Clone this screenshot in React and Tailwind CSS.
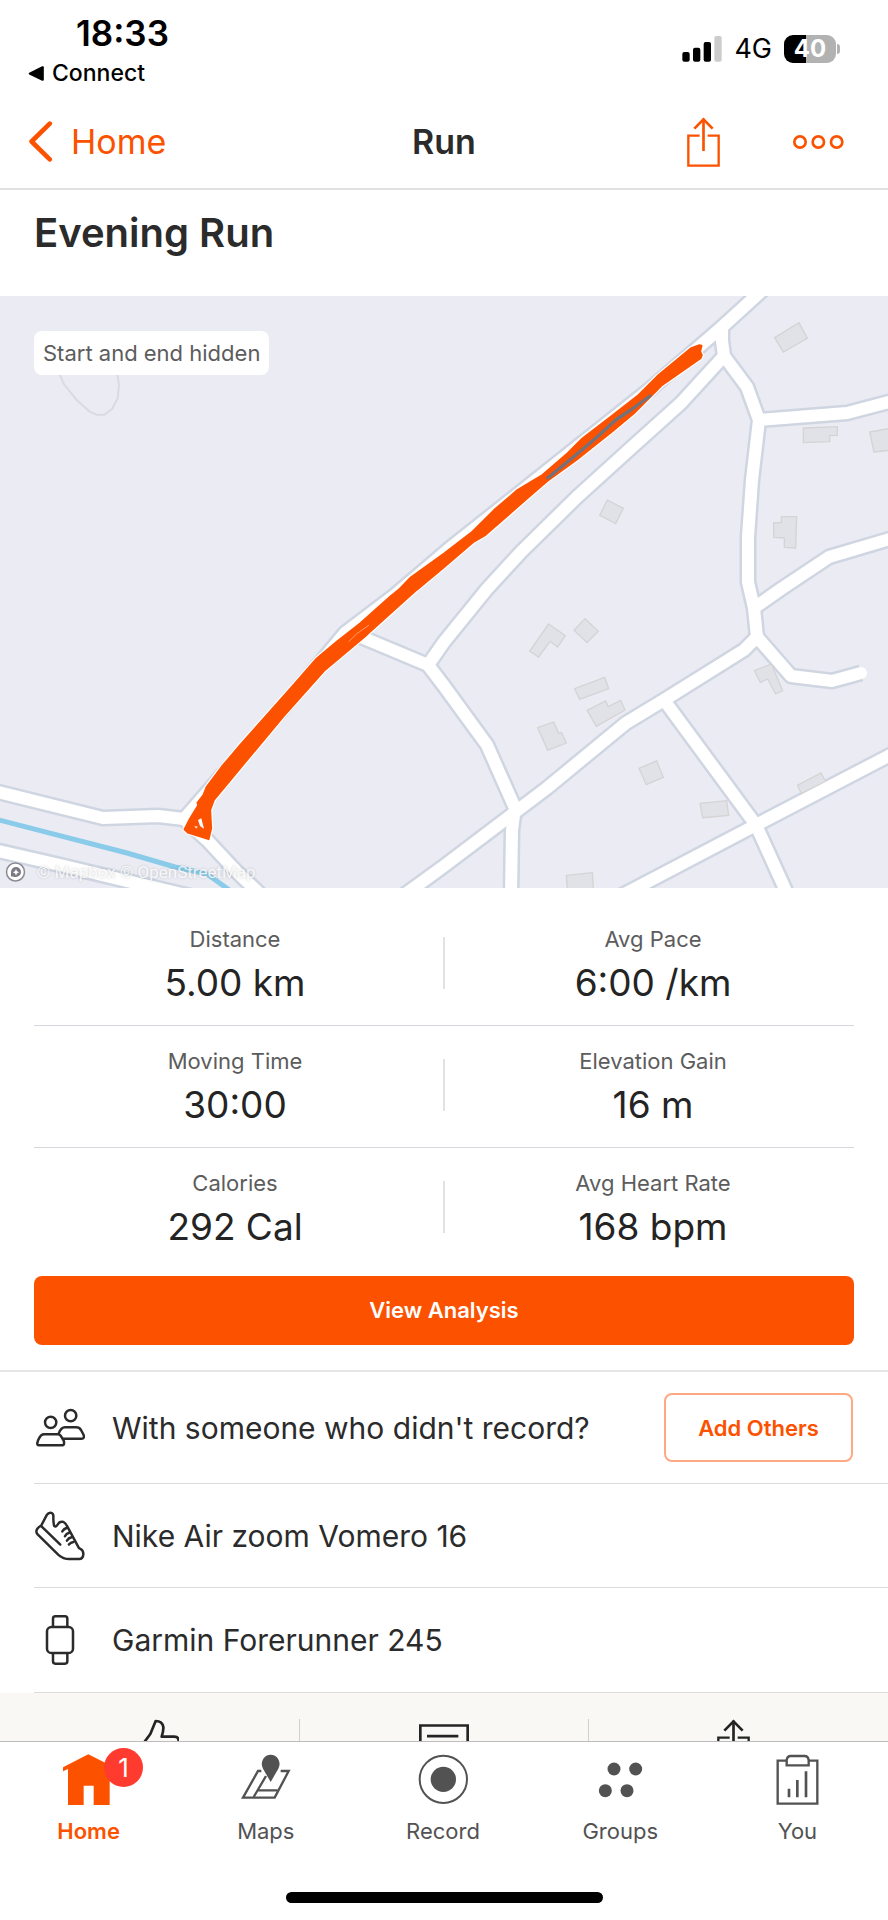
import React from "react";

// Shifts a list of "x,y" pairs by a tile's origin, in thirds of a map unit.
function place(dx, dy, points) {
  return points
    .split(" ")
    .map((pair) => {
      const [x, y] = pair.split(",").map(Number);
      return `${x + dx},${y + dy}`;
    })
    .join(" ");
}

const roads = [
  "780,-22 756,0 722,31 649,94 449,253 395,299 345,337 283,412 219,483 184,523 158,520 103,522 -10,494",
  "184,523 207,544 235,574 262,600",
  "-10,553 60,569 190,600",
  "724,60 681,107 631,152 577,201 521,256 487,293 444,346 428,369 354,338",
  "428,369 444,390 487,449 515,512 512,534 511,600",
  "400,602 444,570 514,517 547,492 626,427 664,404 744,354 757,341 791,380 832,385 861,377",
  "757,341 754,312 748,286 748,241 752,184 759,124 747,91 724,60 722,45 722,31",
  "759,124 847,117 900,103",
  "754,312 781,293 829,261 900,240",
  "664,404 756,529 790,604",
  "900,454 756,529 613,604",
];

const buildings = [
  place(1332, -18, "992,143 1065,98 1090,145 1018,186"),
  place(1332, -18, "1078,414 1180,410 1180,436 1157,437 1157,455 1078,458"),
  place(1332, -18, "1277,426 1345,414 1345,480 1290,486"),
  place(1332, -18, "490,630 538,655 515,701 467,676"),
  place(1332, -18, "1012,680 1058,680 1055,774 1021,772 1021,744 989,742 989,698 1012,698"),
  place(1332, 882, "314,102 364,137 341,171 318,154 284,201 257,183"),
  place(1332, 882, "423,86 463,124 429,158 390,121"),
  place(1332, 882, "392,296 482,262 494,296 407,328"),
  place(1332, 882, "429,361 485,333 493,350 530,331 543,360 457,409"),
  place(1332, 882, "281,413 329,396 344,430 352,427 367,459 311,481"),
  place(1332, 882, "585,535 638,513 658,562 607,584"),
  place(1332, 882, "768,640 848,632 854,676 776,683"),
  place(1332, 882, "931,242 982,222 1016,302 995,312 971,267 949,277"),
  place(1332, 882, "1060,586 1131,549 1145,575 1072,610"),
  place(1332, 882, "367,856 445,848 449,910 371,910"),
];

const route = [
  place(1332, -18, "773,167 766,165 740,175 700,208 640,258 580,318 500,380 415,445 370,490 295,555 220,600 150,660 85,725 0,790"),
  place(0, -18, "1232,862 1195,900"),
  place(0, 882, "1170,20 1080,100 1010,155 950,205 880,285 720,465 665,530 620,590 610,615 592,638 594,646 570,685 553,718 563,728 626,748 634,715 631,660 642,630 700,560 850,380 975,240 1100,135 1250,0"),
  place(1332, -18, "0,832 90,755 125,735 250,625 310,573 400,508 510,420 570,370 620,320 655,285 770,205 774,195 769,185"),
].join(" ");

function RouteMap() {
  return (
    <svg viewBox="0 0 888 592" className="block w-full" role="img" aria-label="Route map">
      <rect width="888" height="592" fill="#ebebf4" />
      <g transform="scale(0.33333)">
        <polyline
          points={place(0, -18, "172,235 180,255 192,283 230,330 268,364 290,374 313,374 336,357 353,325 357,285 350,240")}
          fill="none"
          stroke="#dadbe0"
          strokeWidth="6"
        />
      </g>
      <polyline points="-5,523 127,557 175,571 207,578 232,596" fill="none" stroke="#8acbe9" strokeWidth="5" />
      <g fill="none" stroke="#cfd6e1" strokeWidth="17" strokeLinejoin="round">
        {roads.map((points) => (
          <polyline key={points} points={points} />
        ))}
      </g>
      <g transform="scale(0.33333)" fill="#e1e1e8" stroke="#d5d3d4" strokeWidth="4">
        {buildings.map((points) => (
          <polygon key={points} points={points} />
        ))}
      </g>
      <g fill="none" stroke="#ffffff" strokeWidth="12" strokeLinejoin="round" strokeLinecap="round">
        {roads.map((points) => (
          <polyline key={points} points={points} />
        ))}
      </g>
      <g transform="scale(0.33333)" strokeLinejoin="round" strokeLinecap="round">
        <polygon points={place(1332, -18, "714,196 718,185 728,184 734,194")} fill="#73737b" />
        <polygon points={route} fill="#fc5200" stroke="#ffffff" strokeWidth="12" />
        <polygon points={route} fill="#fc5200" stroke="#fc5200" strokeWidth="5" />
        <polyline
          points={place(1332, -18, "311,564 400,491 460,440 515,390 560,360 618,318")}
          fill="none"
          stroke="#74717a"
          strokeWidth="10"
        />
        <polygon points={place(0, 882, "594,690 604,685 612,716 600,708")} fill="#ffffff" />
        <polygon points={place(0, 882, "583,707 594,710 588,716")} fill="#ffd9c7" />
        <polyline points={place(0, 882, "1047,154 1072,130 1106,106")} fill="none" stroke="#ff9a69" strokeWidth="3" />
      </g>
      <g>
        <circle cx="15.5" cy="576" r="9" fill="#ffffff" stroke="#8b8a95" strokeWidth="1.5" />
        <path d="M11 580.5v-4.5a5 5 0 1 1 5 5c-2 0-3.500-.5-5-.5z" fill="#7b7a86" />
        <path d="M16 573l1 2.200 2.200 1-2.200 1-1 2.200-1-2.200-2.200-1 2.200-1z" fill="#ffffff" />
      </g>
    </svg>
  );
}

function ShareIcon({ className }) {
  return (
    <svg viewBox="0 0 99 150" className={className} fill="none" stroke="currentColor" aria-hidden="true">
      <path d="M38 56H4V146H95V56H62" strokeWidth="7" />
      <path d="M49.500 102V5" strokeWidth="8" />
      <path d="M22 35L49.500 7L77 35" strokeWidth="8" />
    </svg>
  );
}

function StatusBar() {
  return (
    <div className="flex items-start justify-between pt-[13px] pr-12 pl-7 text-black">
      <div>
        <p className="pl-12 text-[35px] leading-10 font-semibold">18:33</p>
        <a href="#connect" className="flex items-center gap-2 text-[23px] leading-10 font-medium">
          <svg viewBox="0 0 46 44" className="h-[15px] w-4" aria-hidden="true">
            <path d="M3 20L41 1Q46 0 46 4V40Q46 44 41 43L3 25Q0 22 3 20Z" />
          </svg>
          Connect
        </a>
      </div>
      <div className="flex items-center gap-3 pt-4">
        <svg viewBox="0 0 120 78" className="h-[26px] w-10" aria-label="Signal">
          <rect x="1" y="48" width="22" height="29" rx="6" />
          <rect x="33" y="35" width="22" height="42" rx="6" />
          <rect x="65" y="18" width="22" height="59" rx="6" />
          <rect x="97" y="0" width="22" height="77" rx="6" fill="#cccccc" />
        </svg>
        <span className="text-[27px] leading-10">4G</span>
        <div className="flex items-center gap-px">
          <div className="flex h-7 w-[52px] items-center justify-center rounded-[9px] bg-linear-to-r from-black from-42% to-[#b2b2b2] to-42% text-2xl leading-7 font-bold text-white">
            40
          </div>
          <div className="h-[10px] w-[3px] rounded-r-full bg-[#b2b2b2]" />
        </div>
      </div>
    </div>
  );
}

function NavBar() {
  return (
    <nav className="grid h-[97px] grid-cols-[1fr_auto_1fr] items-center border-b-2 border-[#e0e0e0] px-7 pt-0.5 text-[34px] leading-10 text-[#fc5200]">
      <a href="#home" className="flex items-center gap-[18px]">
        <svg viewBox="0 0 74 124" className="h-[41px] w-[25px]" fill="none" stroke="currentColor" strokeWidth="14" strokeLinecap="round" strokeLinejoin="round" aria-hidden="true">
          <path d="M65 8L10 62L65 116" />
        </svg>
        Home
      </a>
      <h1 className="font-semibold text-[#2b2b2b]">Run</h1>
      <div className="flex items-center justify-end gap-[73px] pr-4">
        <button type="button" aria-label="Share">
          <ShareIcon className="h-[50px] w-[33px]" />
        </button>
        <button type="button" aria-label="More options">
          <svg viewBox="0 0 153 42" className="h-[14px] w-[51px]" fill="none" stroke="currentColor" strokeWidth="8" aria-hidden="true">
            <circle cx="21" cy="21" r="17" />
            <circle cx="76" cy="21" r="17" />
            <circle cx="131" cy="21" r="17" />
          </svg>
        </button>
      </div>
    </nav>
  );
}

function Stat({ label, value }) {
  return (
    <div className="flex-1 text-center">
      <p className="text-[22px] leading-8 text-[#5c5c5c]">{label}</p>
      <p className="mt-2 text-[37px] leading-10 text-[#242424]">{value}</p>
    </div>
  );
}

const stats = [
  [["Distance", "5.00 km"], ["Avg Pace", "6:00 /km"]],
  [["Moving Time", "30:00"], ["Elevation Gain", "16 m"]],
  [["Calories", "292 Cal"], ["Avg Heart Rate", "168 bpm"]],
];

function PeopleIcon() {
  return (
    <svg viewBox="0 0 150 150" className="size-[50px]" fill="none" stroke="currentColor" strokeWidth="7.500" strokeLinejoin="round" strokeLinecap="round">
      <circle cx="107" cy="38" r="17" />
      <circle cx="47" cy="58" r="17" />
      <path d="M27 94H68Q74 94 77 98L86 113Q88 117 87 122Q86 127 80 127H12Q6 127 7 120Q8 113 12 106Q18 94 27 94Z" />
      <path d="M71 92Q78 73 90 73H124Q133 73 138 81L146 96Q149 107 140 107H84" />
    </svg>
  );
}

function ShoeIcon() {
  return (
    <svg viewBox="0 0 152 150" className="size-[50px]" fill="none" stroke="currentColor" strokeWidth="7.500" strokeLinejoin="round" strokeLinecap="round">
      <path d="M19 43L36 11Q40 4 47 4Q56 5 56 15Q55 30 58 44Q64 49 69 40Q75 29 86 32Q93 35 98 46L130 105Q132 112 138 114Q147 118 147 130Q146 145 134 145H104Q86 145 72 133L8 70Q1 62 7 53Q12 47 19 43Z" />
      <path d="M19 45L77 101" />
      <path d="M97 50Q88 53 83 61M104 65Q95 67 91 76M111 79Q102 81 97 89M117 93Q108 94 103 101" />
    </svg>
  );
}

function WatchIcon() {
  return (
    <svg viewBox="0 0 150 150" className="size-[50px]" fill="none" stroke="currentColor" strokeWidth="7.500" strokeLinejoin="round">
      <rect x="36" y="36" width="78" height="78" rx="13" />
      <path d="M54 36V11Q54 4 61 4H90Q97 4 97 11V36M54 114V139Q54 146 61 146H90Q97 146 97 139V114" />
    </svg>
  );
}

function DetailRow({ icon, children, className }) {
  return (
    <li className={`ml-[34px] flex items-center gap-[26px] border-b border-[#dcdcda] pr-[35px] text-[30px] leading-10 text-[#2b2b2b] ${className}`}>
      <span className="flex w-[52px] shrink-0 justify-center" aria-hidden="true">{icon}</span>
      {children}
    </li>
  );
}

function ActionBar() {
  return (
    <div className="flex bg-[#f9f8f4] px-2.5 pt-[26px] pb-7 text-[#242424]">
      <button type="button" aria-label="Give kudos" className="flex h-[52px] flex-1 justify-center">
        <svg viewBox="0 0 150 150" className="size-[50px]" fill="none" stroke="currentColor" strokeWidth="8" strokeLinejoin="round" aria-hidden="true">
          <path d="M4 88H32L64 45L80 6Q100 6 103 24Q104 34 98 53H136Q149 53 149 66L136 128Q133 142 118 142H4Z" />
        </svg>
      </button>
      <button type="button" aria-label="Comment" className="flex h-[52px] flex-1 justify-center border-x border-[#cfcfcc] pt-[5px]">
        <svg viewBox="0 0 150 140" className="h-[47px] w-[50px]" fill="none" stroke="currentColor" strokeWidth="8" aria-hidden="true">
          <path d="M4 4H146V106H84L54 134V106H4Z" />
          <path d="M24 36H118M24 62H100" />
        </svg>
      </button>
      <button type="button" aria-label="Share activity" className="flex h-[52px] flex-1 justify-center">
        <ShareIcon className="h-[50px] w-[33px]" />
      </button>
    </div>
  );
}

function TabBar() {
  const tabs = [
    {
      label: "Home",
      icon: (
        <svg viewBox="0 0 153 153" className="size-[51px]" fill="currentColor" aria-hidden="true">
          <path d="M76 1L153 40V51L140 45V153H92V95H62V153H15V45L0 52V40Z" />
        </svg>
      ),
    },
    {
      label: "Maps",
      icon: (
        <svg viewBox="0 0 153 153" className="size-[51px]" fill="none" stroke="currentColor" strokeWidth="7" aria-hidden="true">
          <path d="M64 51H54L9 131H104L146 51H122" />
          <path d="M78 66L41 129M52 109H113" />
          <path d="M92 84L69 44Q61 28 70 14Q78 2 92 2Q106 2 114 14Q123 28 115 44Z" fill="currentColor" stroke="none" />
        </svg>
      ),
    },
    {
      label: "Record",
      icon: (
        <svg viewBox="0 0 153 153" className="size-[51px]" fill="none" stroke="currentColor" strokeWidth="6" aria-hidden="true">
          <circle cx="76" cy="76" r="71" />
          <circle cx="76" cy="76" r="38" fill="currentColor" stroke="none" />
        </svg>
      ),
    },
    {
      label: "Groups",
      icon: (
        <svg viewBox="0 0 153 153" className="size-[51px]" fill="currentColor" aria-hidden="true">
          <circle cx="57" cy="45" r="19.500" />
          <circle cx="122" cy="45" r="19.500" />
          <circle cx="31" cy="110" r="19.500" />
          <circle cx="96" cy="110" r="19.500" />
        </svg>
      ),
    },
    {
      label: "You",
      icon: (
        <svg viewBox="0 0 153 153" className="size-[51px]" fill="none" stroke="currentColor" strokeWidth="7" aria-hidden="true">
          <path d="M44 20H17V149H136V20H110" />
          <path d="M44 34V18Q46 6 56 6H98Q108 6 110 18V34Z" />
          <path d="M51 104V130M76 78V130M102 52V130" strokeWidth="8" />
        </svg>
      ),
    },
  ];
  return (
    <nav className="shrink-0 border-t border-[#bdbdbd] bg-white pb-[17px]">
      <ul className="flex pt-3 pr-0.5">
        {tabs.map((tab, index) => (
          <li key={tab.label} className="flex-1">
            <a
              href={`#${tab.label.toLowerCase()}`}
              aria-current={index === 0 ? "page" : undefined}
              className={`flex flex-col items-center gap-2 text-[22px] leading-9 ${index === 0 ? "font-semibold text-[#fc5200]" : "text-[#525252]"}`}
            >
              <span className="relative">
                {tab.icon}
                {index === 0 && (
                  <span className="absolute -top-1.5 left-[41px] flex size-[39px] items-center justify-center rounded-full bg-[#ff3b30] text-[26px] leading-none font-normal text-white">
                    1
                  </span>
                )}
              </span>
              {tab.label}
            </a>
          </li>
        ))}
      </ul>
      <div className="mx-auto mt-[43px] h-[11px] w-[317px] rounded-full bg-black" />
    </nav>
  );
}

export default function App() {
  return (
    <div className="flex h-screen flex-col bg-white font-['Inter',sans-serif] text-[#2b2b2b]">
      <header className="shrink-0">
        <StatusBar />
        <NavBar />
      </header>
      <main className="min-h-0 flex-1 overflow-y-auto [scrollbar-width:none]">
        <h2 className="px-[34px] pt-[19px] pb-[39px] text-[40px] leading-12 font-semibold">Evening Run</h2>
        <div className="relative">
          <RouteMap />
          <p className="absolute top-[35px] left-[34px] rounded-lg bg-white px-[9px] text-[22px] leading-11 text-[#5c5c5c]">
            Start and end hidden
          </p>
          <p className="absolute bottom-1 left-[37px] font-['Roboto',sans-serif] text-[17px] leading-6 text-white/80 text-shadow-[0_0_3px_#00000033]">
            © Mapbox © OpenStreetMap
          </p>
        </div>
        <section className="px-[34px] pt-4">
          {stats.map(([left, right]) => (
            <div key={left[0]} className="flex h-[122px] items-center border-b border-[#d6d6dc] pb-1 last:border-b-0">
              <Stat label={left[0]} value={left[1]} />
              <div className="mx-[7px] h-[52px] w-0.5 bg-[#e2e2e6]" />
              <Stat label={right[0]} value={right[1]} />
            </div>
          ))}
        </section>
        <div className="border-b-2 border-[#e6e6e6] px-[34px] pt-1.5 pb-[25px]">
          <button type="button" className="h-[69px] w-full rounded-lg bg-[#fc5200] text-[22px] font-semibold text-white">
            View Analysis
          </button>
        </div>
        <ul>
          <DetailRow icon={<PeopleIcon />} className="h-28">
            <span className="flex-1">With someone who didn't record?</span>
            <button type="button" className="h-[69px] w-[189px] rounded-lg border-2 border-[#ffa984] text-[22px] font-semibold text-[#fc5200]">
              Add Others
            </button>
          </DetailRow>
          <DetailRow icon={<ShoeIcon />} className="h-[104px]">Nike Air zoom Vomero 16</DetailRow>
          <DetailRow icon={<WatchIcon />} className="h-[105px]">Garmin Forerunner 245</DetailRow>
        </ul>
        <ActionBar />
      </main>
      <TabBar />
    </div>
  );
}
